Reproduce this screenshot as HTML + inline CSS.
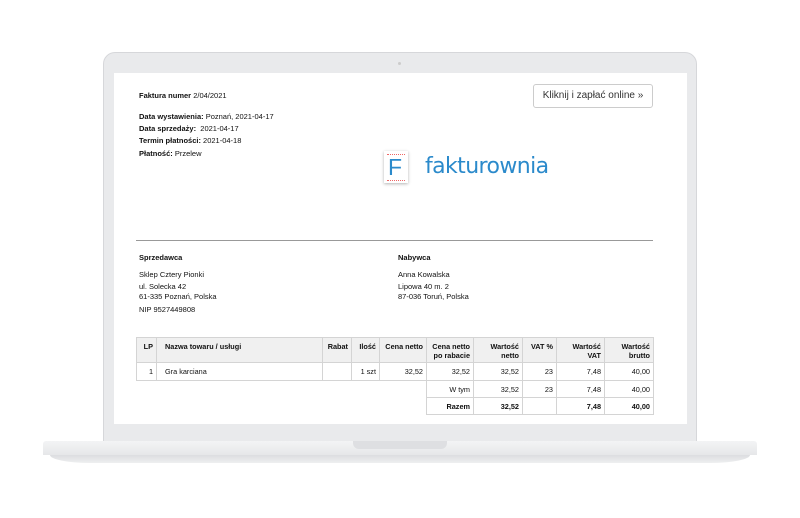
<!DOCTYPE html>
<html><head><meta charset="utf-8"><style>
body{margin:0;width:800px;height:518px;background:#fff;position:relative;overflow:hidden;font-family:"Liberation Sans",sans-serif;color:#111}
.a{position:absolute}
.lid{left:103px;top:52px;width:594px;height:392px;background:#e9eaec;border:1px solid #d6d7da;border-radius:12px 12px 0 0;box-sizing:border-box}
.scr{left:114px;top:73px;width:573px;height:351px;background:#fff}
.base{left:43px;top:441px;width:714px;height:14px;background:linear-gradient(#f3f4f5,#e6e7e9);border-radius:3px 3px 0 0}
.base2{left:50px;top:455px;width:700px;height:8px;background:linear-gradient(#dcdde0,#eeeff0);border-radius:0 0 40px 40px/0 0 8px 8px}
.notch{left:353px;top:441px;width:94px;height:8px;background:#dedfe2;border-radius:0 0 6px 6px}
.t{font-size:7.5px;line-height:9px}
b{font-weight:bold}
table{position:absolute;left:136px;top:337px;border-collapse:collapse;font-size:7.3px}
td{border:1px solid #d4d4d4;padding:1px 3px;text-align:right;height:18px;box-sizing:border-box}
tr.s td{height:17px}
tr.h td{background:#f0f0f0;font-weight:bold;height:25px;vertical-align:top;padding-top:4px}
td.n{border:none}
</style></head><body>
<div class="a lid"></div>
<div class="a" style="left:398px;top:62px;width:3px;height:3px;border-radius:50%;background:#ccc"></div>
<div class="a scr"></div>
<div class="a base"></div><div class="a base2"></div><div class="a notch"></div>

<div class="a t" style="left:139px;top:91px"><b>Faktura numer</b> 2/04/2021</div>
<div class="a t" style="left:139px;top:112px"><b>Data wystawienia:</b> Poznań, 2021-04-17</div>
<div class="a t" style="left:139px;top:124px"><b>Data sprzedaży:</b> &nbsp;2021-04-17</div>
<div class="a t" style="left:139px;top:136px"><b>Termin płatności:</b> 2021-04-18</div>
<div class="a t" style="left:139px;top:149px"><b>Płatność:</b> Przelew</div>

<div class="a" style="left:533px;top:84px;width:120px;height:24px;border:1px solid #ccc;border-radius:3px;box-sizing:border-box;font-size:10px;line-height:22px;text-align:center;color:#333">Kliknij i zapłać online »</div>

<div class="a" style="left:384px;top:151px;width:24px;height:32px;background:#fff;box-shadow:0 1px 3px rgba(0,0,0,.3);"></div>
<div class="a" style="left:387px;top:154px;width:18px;height:0;border-top:1px dotted #e66"></div>
<div class="a" style="left:387px;top:180px;width:18px;height:0;border-top:1px dotted #e66"></div>
<div class="a" style="left:388px;top:152px;font-size:23px;color:#2b8acb;line-height:30px">F</div>
<div class="a" style="left:425px;top:152px;font-size:22px;color:#2b8acb;line-height:30px;font-family:'DejaVu Sans',sans-serif;letter-spacing:-0.6px">fakturownia</div>

<div class="a" style="left:136px;top:240px;width:517px;height:1px;background:#999"></div>
<div class="a t" style="left:139px;top:253px"><b>Sprzedawca</b></div>
<div class="a t" style="left:139px;top:270px">Sklep Cztery Pionki</div>
<div class="a t" style="left:139px;top:282px">ul. Solecka 42</div>
<div class="a t" style="left:139px;top:292px">61-335 Poznań, Polska</div>
<div class="a t" style="left:139px;top:305px">NIP 9527449808</div>
<div class="a t" style="left:398px;top:253px"><b>Nabywca</b></div>
<div class="a t" style="left:398px;top:270px">Anna Kowalska</div>
<div class="a t" style="left:398px;top:282px">Lipowa 40 m. 2</div>
<div class="a t" style="left:398px;top:292px">87-036 Toruń, Polska</div>

<table>
<tr class="h"><td style="width:20px">LP</td><td style="width:166px;text-align:left;padding-left:8px">Nazwa towaru / usługi</td><td style="width:29px">Rabat</td><td style="width:28px">Ilość</td><td style="width:47px">Cena netto</td><td style="width:47px">Cena netto<br>po rabacie</td><td style="width:49px">Wartość<br>netto</td><td style="width:34px">VAT %</td><td style="width:48px">Wartość<br>VAT</td><td style="width:49px">Wartość<br>brutto</td></tr>
<tr><td>1</td><td style="text-align:left;padding-left:8px">Gra karciana</td><td></td><td>1 szt</td><td>32,52</td><td>32,52</td><td>32,52</td><td>23</td><td>7,48</td><td>40,00</td></tr>
<tr class="s"><td class="n" colspan="5"></td><td>W tym</td><td>32,52</td><td>23</td><td>7,48</td><td>40,00</td></tr>
<tr class="s"><td class="n" colspan="5"></td><td><b>Razem</b></td><td><b>32,52</b></td><td></td><td><b>7,48</b></td><td><b>40,00</b></td></tr>
</table>
</body></html>
